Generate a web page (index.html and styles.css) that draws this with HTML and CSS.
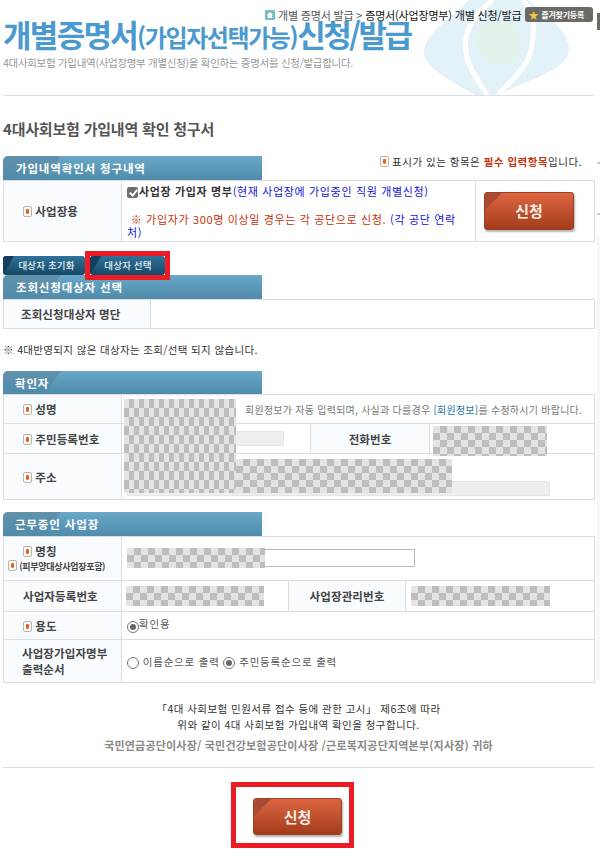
FILE: index.html
```html
<!DOCTYPE html>
<html lang="ko">
<head>
<meta charset="utf-8">
<title>개별증명서 신청/발급</title>
<link rel="stylesheet" href="styles.css">
</head>
<body>
<div class="edge edge-a"></div><div class="edge edge-b"></div><div class="edge edge-c"></div><div class="edge edge-d"></div>
<div class="page">
  <header class="top">
    <svg class="logo" viewBox="0 0 150 96" aria-hidden="true">
      <path class="logo-outer" d="M45 0C30 18 3 30 0 52c-1 16 28 30 52 44h24c24-14 70-24 71-46C146 30 122 14 105 0z"/>
      <path class="logo-ring" d="M70 0C52 14 42 28 42 46c0 20 14 36 22 50M100 0c14 14 11 32 9 48-3 20-22 34-34 48"/>
      <ellipse class="logo-core" cx="76" cy="43" rx="23" ry="23"/>
    </svg>
    <div class="crumbs">
      <svg class="home" viewBox="0 0 10 10" aria-hidden="true"><rect width="10" height="10" rx="1.5" fill="#76bcc4"/><path d="M5 2 1.8 5h1v3h4.400V5h1z" fill="#fff"/></svg>
      <span class="crumb-grey">개별 증명서 발급 &gt;</span>
      <span class="crumb-dark">증명서(사업장명부) 개별 신청/발급</span>
      <span class="fav"><span class="fav-star">★</span>즐겨찾기등록</span>
    </div>
    <h1 class="title">개별증명서<small>(가입자선택가능)</small><span class="title-end">신청/발급</span></h1>
    <p class="desc">4대사회보험 가입내역(사업장명부 개별신청)을 확인하는 증명서를 신청/발급합니다.</p>
  </header>

  <h2 class="heading">4대사회보험 가입내역 확인 청구서</h2>

  <div class="head-row">
    <div class="tab">가입내역확인서 청구내역</div>
    <p class="legend"><i class="req"></i> 표시가 있는 항목은 <b class="red">필수 입력항목</b>입니다.</p>
  </div>
  <table class="grid">
    <colgroup><col class="c118"><col class="c354"><col class="c119"></colgroup>
    <tr class="h61">
      <th><i class="req"></i> 사업장용</th>
      <td class="apply">
        <div class="line"><input type="checkbox" class="check" checked><b>사업장 가입자 명부</b><span class="blue">(현재 사업장에 가입중인 직원 개별신청)</span></div>
        <div class="line gap"><span class="red">&nbsp;※ 가입자가 300명 이상일 경우는 각 공단으로 신청.</span> <span class="blue">(각 공단 연락처)</span></div>
      </td>
      <td><a class="btn-red btn-small">신청</a></td>
    </tr>
  </table>

  <div class="btn-row">
    <a class="btn-blue btn-reset">대상자 초기화</a>
    <span class="redbox redbox-small"><a class="btn-blue btn-select">대상자 선택</a></span>
  </div>

  <div class="tab">조회신청대상자 선택</div>
  <table class="grid">
    <colgroup><col class="c147"><col class="c444"></colgroup>
    <tr class="h29"><th class="lead">조회신청대상자 명단</th><td></td></tr>
  </table>

  <p class="note">※ 4대반영되지 않은 대상자는 조회/선택 되지 않습니다.</p>

  <div class="tab tab-s3">확인자</div>
  <div class="wrap">
    <table class="grid">
      <colgroup><col class="c118"><col class="c189"><col class="c119"><col class="c165"></colgroup>
      <tr class="h29"><th><i class="req"></i> 성명</th><td colspan="3" class="hint">회원정보가 자동 입력되며, 사실과 다를경우 <span class="link">[회원정보]</span>를 수정하시기 바랍니다.</td></tr>
      <tr class="h30"><th><i class="req"></i> 주민등록번호</th><td class="pad"><span class="grey-input w157"></span></td><th class="plain">전화번호</th><td></td></tr>
      <tr class="h46"><th><i class="req"></i> 주소</th><td colspan="3" class="pad bottom"><span class="grey-input w423"></span></td></tr>
    </table>
    <div class="mask tall m-name"></div>
    <div class="mask m-addr"></div>
    <div class="mask m-phone"></div>
  </div>

  <div class="tab tab-s4">근무중인 사업장</div>
  <table class="grid">
    <colgroup><col class="c118"><col class="c167"><col class="c117"><col class="c189"></colgroup>
    <tr class="h44">
      <th class="stack"><span><i class="req"></i> 명칭</span><span class="sub"><i class="req"></i> (피부양대상사업장포함)</span></th>
      <td colspan="3" class="pad"><div class="name-input"><div class="mask m-corp"></div></div></td>
    </tr>
    <tr class="h31">
      <th>사업자등록번호</th><td class="pad-s"><div class="mask m-biz"></div></td>
      <th class="plain">사업장관리번호</th><td class="pad"><div class="mask m-biz m-mgmt"></div></td>
    </tr>
    <tr class="h28"><th><i class="req"></i> 용도</th><td colspan="3" class="pad radios"><input type="radio" class="radio" checked><span class="raise">확인용</span></td></tr>
    <tr class="h43">
      <th class="plain left">사업장가입자명부<br>출력순서</th>
      <td colspan="3" class="pad radios"><input type="radio" class="radio" name="o"><span> 이름순으로 출력</span> <input type="radio" class="radio" name="o" checked><span> 주민등록순으로 출력</span></td>
    </tr>
  </table>

  <div class="closing">
    <p>「4대 사회보험 민원서류 접수 등에 관한 고시」 제6조에 따라</p>
    <p>위와 같이 4대 사회보험 가입내역 확인을 청구합니다.</p>
    <p class="to">국민연금공단이사장/ 국민건강보험공단이사장 /근로복지공단지역본부(지사장) 귀하</p>
  </div>
  <div class="foot">
    <span class="redbox redbox-big"><a class="btn-red btn-big">신청</a></span>
  </div>
</div>
</body>
</html>
```

FILE: styles.css
```css
* { box-sizing: border-box; }
html, body { margin: 0; padding: 0; height: 854px; overflow: hidden; background: #fff; }
body { position: relative; font-family: "Noto Sans CJK KR", "Noto Sans", sans-serif; font-size: 11px; color: #333; }
p, h1, h2 { margin: 0; }
.page { width: 600px; padding: 0 6px 0 3px; }

.edge { position: absolute; left: 597px; width: 3px; }
.edge-a { top: 13px; height: 17px; background: #6d6a62; }
.edge-b { top: 162px; height: 2px; background: #ccc; }
.edge-c { top: 213px; height: 2px; background: #ccc; }
.edge-d { top: 235px; height: 445px; background: #f7f7f7; }

/* header */
.top { position: relative; height: 96px; border-bottom: 1px solid #dcdfe3; }
.logo { position: absolute; left: 420px; top: 0; width: 150px; height: 95px; }
.logo-outer { fill: #e3f1f8; }
.logo-ring { fill: none; stroke: #fff; stroke-width: 5; }
.logo-core { fill: #e4f2ec; }
.crumbs { position: relative; display: flex; align-items: center; height: 15px; top: 7px; left: 262px; width: 340px; font-size: 11px; letter-spacing: -.18px; white-space: nowrap; }
.home { width: 10px; height: 10px; margin-right: 3px; }
.crumb-grey { color: #555; margin-right: 3px; }
.crumb-dark { color: #111; }
.fav { display: inline-flex; align-items: center; width: 68px; height: 15px; margin-left: 4px; padding-left: 3px; border-radius: 3px; background: #6b6a66; color: #fff; font-size: 8px; font-weight: 700; letter-spacing: -.2px; }
.fav-star { color: #f5c842; font-size: 10px; margin-right: 3px; }
.title { position: relative; margin-top: 3px; height: 32px; color: #4a9ad0; font-size: 31px; line-height: 32px; font-weight: 700; letter-spacing: -1.7px; white-space: nowrap; }
.title small { font-size: 24px; font-weight: 700; letter-spacing: -1.4px; }
.title-end { letter-spacing: -2.6px; }
.desc { position: relative; margin-top: 6px; color: #999; font-size: 10.5px; line-height: 14px; letter-spacing: -.3px; }

.heading { height: 20px; margin: 23px 0 0; color: #555; font-size: 15px; line-height: 20px; font-weight: 700; letter-spacing: -.2px; }

/* section tabs */
.head-row { display: flex; justify-content: space-between; margin-top: 17px; }
.legend { padding: 0 12px 0 0; font-size: 10.5px; line-height: 12px; letter-spacing: .5px; color: #333; }
.tab { position: relative; isolation: isolate; overflow: hidden; width: 259px; height: 24px; padding-left: 13px; border-radius: 5px 0 0 0; background: linear-gradient(#69a8c8, #4f8bab); color: #fff; font-size: 11.5px; font-weight: 700; line-height: 25px; letter-spacing: .85px; }
.tab::before { content: ""; position: absolute; z-index: -1; left: 0; top: 0; width: 58px; height: 24px; background: linear-gradient(#5b7f94, #4f8bab); clip-path: polygon(0 0, 100% 0, 70% 100%, 0 100%); opacity: .55; }
.tab-s3 { margin-top: 14px; height: 23px; padding-left: 12px; }
.tab-s4 { margin-top: 12px; padding-left: 12px; }

/* tables */
.grid { width: 591px; table-layout: fixed; border-collapse: collapse; border-top: 1px solid #5f8db3; }
.grid th, .grid td { border: 1px solid #ddd; padding: 0; }
.grid th { background: #f8fcff; font-size: 11.5px; font-weight: 700; color: #444; text-align: left; padding-left: 19px; letter-spacing: .1px; }
.grid th.plain { padding-left: 0; text-align: center; }
.grid th.lead { padding-left: 17px; }
.grid th.left { text-align: left; padding-left: 18px; line-height: 16px; }
.c118 { width: 118px; } .c119 { width: 119px; } .c117 { width: 117px; }
.c147 { width: 147px; } .c165 { width: 165px; } .c167 { width: 167px; }
.c189 { width: 189px; } .c354 { width: 354px; } .c444 { width: 444px; }
.h28 { height: 28px; } .h29 { height: 29px; } .h30 { height: 30px; } .h31 { height: 31px; } .h43 { height: 43px; }
.h44 { height: 44px; } .h46 { height: 46px; } .h61 { height: 61px; }

.req { display: inline-block; position: relative; width: 9px; height: 11px; border: 1px solid #b9b5ae; border-radius: 2px; background: #fffaf4; vertical-align: -1px; }
.req::after { content: ""; position: absolute; left: 2px; top: 2px; width: 3px; height: 5px; border-radius: 1px 1px 2px 2px; background: #e2622c; }

.apply { padding: 4px 12px 0 5px !important; vertical-align: top; font-size: 11px; line-height: 13px; letter-spacing: .65px; }
.apply b { color: #333; font-weight: 700; }
.line { color: #333; }
.line.gap { margin-top: 15px; }
.check { appearance: none; position: relative; width: 11px; height: 11px; margin: 0 1px 0 0; border-radius: 2px; background: #6f6f6f; vertical-align: -2px; }
.check::after { content: ""; position: absolute; left: 3.500px; top: 1px; width: 3px; height: 6px; border: solid #fff; border-width: 0 2px 2px 0; transform: rotate(40deg); }
.blue { color: #1414dc; }
.red { color: #c8300a; font-weight: 400; }
.legend .red { font-weight: 700; }

/* buttons */
.btn-red { position: relative; display: block; overflow: hidden; border-radius: 3px; border: 1px solid #9a4024; background: linear-gradient(#dd6640, #a33c1c); box-shadow: 1px 2px 2px rgba(0, 0, 0, .3); color: #fbeee6; font-weight: 700; text-align: center; }
.btn-red::before { content: ""; position: absolute; left: 0; top: 0; width: 17px; height: 17px; background: #a84a34; clip-path: polygon(0 0, 100% 0, 0 100%); }
.btn-small { width: 90px; height: 38px; margin-left: 8px; font-size: 15px; line-height: 35px; }
.btn-big { width: 89px; height: 37px; font-size: 15px; line-height: 35px; }
.btn-row { display: flex; align-items: center; height: 19px; margin-top: 14px; }
.btn-blue { position: relative; display: block; overflow: hidden; height: 19px; border-radius: 3px; background: linear-gradient(#2f7299, #154866); color: #e9f2f6; font-size: 9.5px; font-weight: 500; line-height: 18px; text-align: center; letter-spacing: .15px; }
.btn-blue::before { content: ""; position: absolute; left: 0; top: 0; width: 11px; height: 19px; background: #163e5c; clip-path: polygon(0 0, 100% 0, 0 100%); }
.btn-reset { width: 82px; padding-left: 5px; }
.btn-select { width: 75px; padding-left: 1px; }
.redbox { display: block; border: solid #ed1c24; }
.redbox-small { position: relative; z-index: 2; margin: -5px 0; border-width: 5px; }

/* note */
.note { margin-top: 14px; height: 14px; font-size: 10.5px; line-height: 14px; color: #333; letter-spacing: .35px; }

/* confirm table */
.wrap { position: relative; }
.hint { padding-left: 123px !important; color: #777; font-size: 10px; letter-spacing: .25px; white-space: nowrap; }
.link { color: #2b6f99; }
.pad { padding-left: 5px !important; font-size: 11px; }
.pad-s { padding-left: 4px !important; }
.bottom { vertical-align: bottom; padding-bottom: 3px !important; }
.grey-input { display: block; height: 15px; background: #eee; border: 1px solid #e6e6e6; }
.w157 { width: 157px; } .w423 { width: 423px; }
.mask { background: repeating-conic-gradient(#bdbdbd 0 25%, #e4e4e4 0 50%) 0 0 / 14px 14px; }
.wrap > .mask { position: absolute; }
.tall { background-size: 10px 18px; }
.m-name { left: 121px; top: 5px; width: 112px; height: 94px; }
.m-addr { left: 233px; top: 65px; width: 216px; height: 34px; }
.m-phone { left: 430px; top: 32px; width: 114px; height: 30px; }

/* workplace table */
.stack span { display: block; line-height: 17px; }
.grid .stack .sub { margin: -2px 0 0 -15px; font-size: 9px; letter-spacing: -.3px; white-space: nowrap; }
.name-input { position: relative; width: 288px; height: 18px; border: 1px solid #bbb; margin-top: -1px; }
.m-corp { position: absolute; left: -1px; top: -2px; width: 138px; height: 20px; }
.m-biz { width: 138px; height: 20px; }
.m-mgmt { width: 139px; }
.radios { color: #555; letter-spacing: .8px; font-size: 10.500px; }
.radio { appearance: none; position: relative; width: 12px; height: 12px; margin: 0; border: 1px solid #777; border-radius: 50%; background: #fff; vertical-align: -3px; }
.radio:checked::after { content: ""; position: absolute; left: 2px; top: 2px; width: 6px; height: 6px; border-radius: 50%; background: #666; }
.raise { position: relative; top: -2px; }

/* closing */
.closing { margin-top: 18px; height: 67px; border-bottom: 1px solid #ddd; text-align: center; font-size: 10.500px; color: #333; letter-spacing: .45px; }
.closing p { height: 16px; line-height: 16px; }
.closing .to { margin-top: 4px; color: #888; font-weight: 700; font-size: 11px; letter-spacing: .2px; }
.foot { display: flex; justify-content: center; margin-top: 14px; }
.redbox-big { padding: 11px 17px 9px 17px; border-width: 5px; width: 123px; height: 66px; transform: translateX(-6px); }
```
